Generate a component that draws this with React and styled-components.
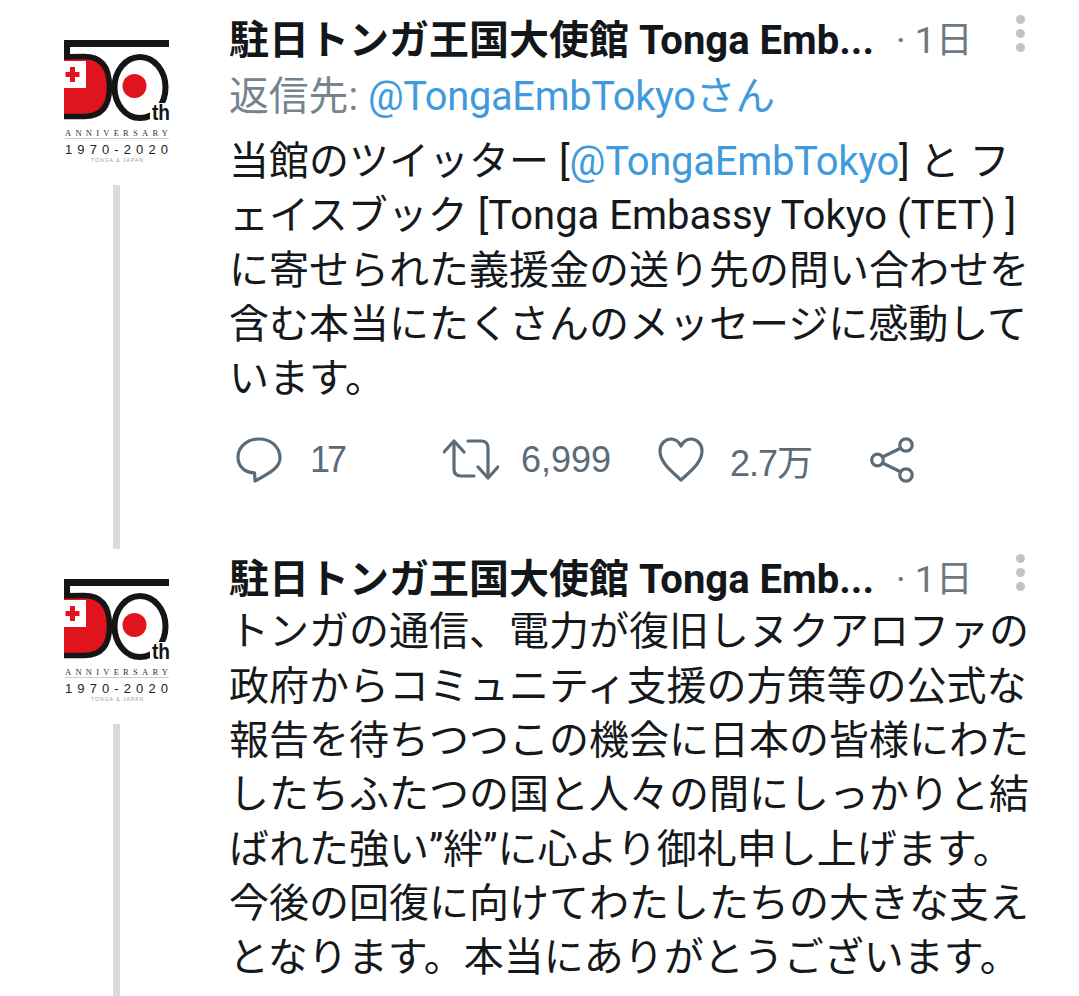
import React from "react";
import styled, { createGlobalStyle } from "styled-components";

const GlobalStyle = createGlobalStyle`
  html, body {
    margin: 0;
    padding: 0;
    background: #fff;
  }
`;

const sans = `Roboto, "Noto Sans CJK JP", sans-serif`;

const Logo = () => (
  <svg width="112" height="126" viewBox="0 0 112 126">
    <rect x="0" y="0" width="105" height="7" fill="#151515" />
    <rect x="0" y="0" width="6" height="16" fill="#151515" />
    <path d="M0 16 Q8 16 20 16 Q45 16 45 47 Q45 76 20 76 H0 Z" fill="#e0141c" />
    <path d="M0 17 Q8 16.5 20 16.5 Q45.5 16.5 45.5 47 Q45.5 76.5 20 76.5 H0" fill="none" stroke="#151515" strokeWidth="5.5" />
    <rect x="0" y="21" width="22" height="27" fill="#fff" />
    <path d="M1.5 32 H6 V27 H11 V32 H15.5 V37 H11 V42 H6 V37 H1.5 Z" fill="#e0141c" />
    <ellipse cx="76" cy="47.5" rx="25.5" ry="30.5" fill="#fff" stroke="#151515" strokeWidth="6" />
    <circle cx="70.5" cy="46" r="12" fill="#e0141c" />
    <rect x="86" y="63" width="20" height="19" fill="#fff" />
    <text x="88" y="80" fontFamily="'Liberation Sans', sans-serif" fontWeight="700" fontSize="22" textLength="18" lengthAdjust="spacingAndGlyphs" fill="#151515">th</text>
    <text x="1" y="96" fontFamily="'Liberation Serif', serif" fontSize="8.5" textLength="103" fill="#333">ANNIVERSARY</text>
    <rect x="1" y="98" width="104" height="1" fill="#ccc" />
    <text x="1" y="114" fontFamily="'Liberation Sans', sans-serif" fontSize="13" textLength="103" fill="#222">1970-2020</text>
    <text x="27" y="122" fontFamily="'Liberation Sans', sans-serif" fontSize="5" textLength="52" fill="#999">TONGA &amp; JAPAN</text>
  </svg>
);

const ReplyIcon = () => (
  <svg width="46" height="46" viewBox="0 0 46 46" fill="none" stroke="#5b6b78" strokeWidth="3.2" strokeLinejoin="round">
    <path d="M23 2 C35 2 44 10 44 21 C44 29 38 34 19 44 L18.6 35.8 C9 36 2 29.5 2 20 C2 10 11 2 23 2 Z" />
  </svg>
);

const RetweetIcon = () => (
  <svg width="56" height="46" viewBox="0 0 56 46" fill="none" stroke="#5b6b78" strokeWidth="3.2" strokeLinecap="round" strokeLinejoin="round">
    <path d="M1 15 L11 4 L21 15" />
    <path d="M11 5 V32 Q11 39 18 39 H31" />
    <path d="M25 4 H38 Q45 4 45 11 V38" />
    <path d="M35 30 L45 41 L55 30" />
  </svg>
);

const HeartIcon = () => (
  <svg width="46" height="46" viewBox="0 0 46 46" fill="none" stroke="#5b6b78" strokeWidth="3.2" strokeLinejoin="round">
    <path d="M23 43 C12 33 2 25 2 14 C2 7 7 2 13 2 C18 2 21 5 23 9 C25 5 28 2 33 2 C39 2 44 7 44 14 C44 25 34 33 23 43 Z" />
  </svg>
);

const ShareIcon = () => (
  <svg width="46" height="46" viewBox="0 0 46 46" fill="none" stroke="#5b6b78" strokeWidth="3.2">
    <circle cx="7.5" cy="23" r="5.8" />
    <circle cx="36" cy="8" r="6.2" />
    <circle cx="36" cy="38" r="6.2" />
    <path d="M12.5 20 L31 11 M12.5 26 L31 35" />
  </svg>
);

const Page = styled.div`
  width: 1079px;
  height: 996px;
  overflow: hidden;
  padding-top: 10px;
  box-sizing: border-box;
  font-family: ${sans};
  background: #fff;
`;

const Tweet = styled.article`
  display: flex;
`;

const Rail = styled.div`
  width: 229px;
  flex: none;
  padding: 30px 0 0 64px;
  box-sizing: border-box;
  display: flex;
  flex-direction: column;
`;

const ThreadLine = styled.div`
  width: 7px;
  flex: 1;
  margin: 19px 0 0 49px;
  background: #d9dadb;
`;

const Main = styled.div`
  flex: 1;
  min-width: 0;
  padding-right: 40px;
  padding-bottom: ${(p) => p.$pad}px;
`;

const Header = styled.div`
  display: flex;
  align-items: center;
  height: 54px;
  white-space: nowrap;
`;

const Name = styled.span`
  font-size: 40px;
  font-weight: 700;
  color: #14171a;
  width: 647px;
`;

const Time = styled.span`
  font-size: 37px;
  font-weight: 400;
  color: #70787f;
  margin-left: 20px;
`;

const Dots = styled.div`
  margin-left: auto;
  margin-right: 14px;
  display: flex;
  flex-direction: column;
  gap: 5px;
  margin-top: -8px;

  i {
    display: block;
    width: 9px;
    height: 9px;
    border-radius: 50%;
    background: #c0c4c7;
  }
`;

const ReplyTo = styled.div`
  font-size: 39.8px;
  line-height: 60px;
  color: #77848e;
  white-space: nowrap;
  margin: 3px 0 8px;
`;

const Mention = styled.span`
  color: #3f9bdc;
  letter-spacing: -0.3px;
`;

const Body = styled.div`
  font-size: 40px;
  line-height: 54.3px;
  color: #16191c;
  margin-top: ${(p) => p.$top || 0}px;
`;

const Line = styled.div`
  white-space: nowrap;
`;

const Actions = styled.div`
  display: flex;
  align-items: center;
  margin: 31px 0 0 7px;
  height: 46px;
`;

const Action = styled.div`
  display: flex;
  align-items: center;
  width: ${(p) => p.$w}px;
  gap: ${(p) => p.$gap}px;
  font-family: "Liberation Sans", "Noto Sans CJK JP", sans-serif;
  font-size: 36px;
  letter-spacing: ${(p) => p.$ls || 0}px;
  color: #5b6b78;
  svg {
    flex: none;
  }
`;

const TweetHead = () => (
  <Header>
    <Name>駐日トンガ王国大使館 Tonga Emb...</Name>
    <Time>· 1日</Time>
    <Dots>
      <i />
      <i />
      <i />
    </Dots>
  </Header>
);

const secondLines = [
  "トンガの通信、電力が復旧しヌクアロファの",
  "政府からコミュニティ支援の方策等の公式な",
  "報告を待ちつつこの機会に日本の皆様にわた",
  "したちふたつの国と人々の間にしっかりと結",
  "ばれた強い”絆”に心より御礼申し上げます。",
  "今後の回復に向けてわたしたちの大きな支え",
  "となります。本当にありがとうございます。",
];

export default function App() {
  return (
    <Page>
      <GlobalStyle />
      <Tweet>
        <Rail>
          <Logo />
          <ThreadLine />
        </Rail>
        <Main $pad={66}>
          <TweetHead />
          <ReplyTo>
            返信先: <Mention>@TongaEmbTokyoさん</Mention>
          </ReplyTo>
          <Body>
            <Line>
              当館のツイッター [<Mention>@TongaEmbTokyo</Mention>] と フ
            </Line>
            <Line>ェイスブック [Tonga Embassy Tokyo (TET) ]</Line>
            <Line>に寄せられた義援金の送り先の問い合わせを</Line>
            <Line>含む本当にたくさんのメッセージに感動して</Line>
            <Line>います。</Line>
          </Body>
          <Actions>
            <Action $w={207} $gap={28} $ls={-3}>
              <ReplyIcon />
              17
            </Action>
            <Action $w={215} $gap={22}>
              <RetweetIcon />
              6,999
            </Action>
            <Action $w={212} $gap={26} $ls={-1}>
              <HeartIcon />
              2.7万
            </Action>
            <Action $w={46} $gap={0}>
              <ShareIcon />
            </Action>
          </Actions>
        </Main>
      </Tweet>
      <Tweet>
        <Rail>
          <Logo />
          <ThreadLine />
        </Rail>
        <Main $pad={60}>
          <TweetHead />
          <Body $top={2}>
            {secondLines.map((l) => (
              <Line key={l}>{l}</Line>
            ))}
          </Body>
        </Main>
      </Tweet>
    </Page>
  );
}
